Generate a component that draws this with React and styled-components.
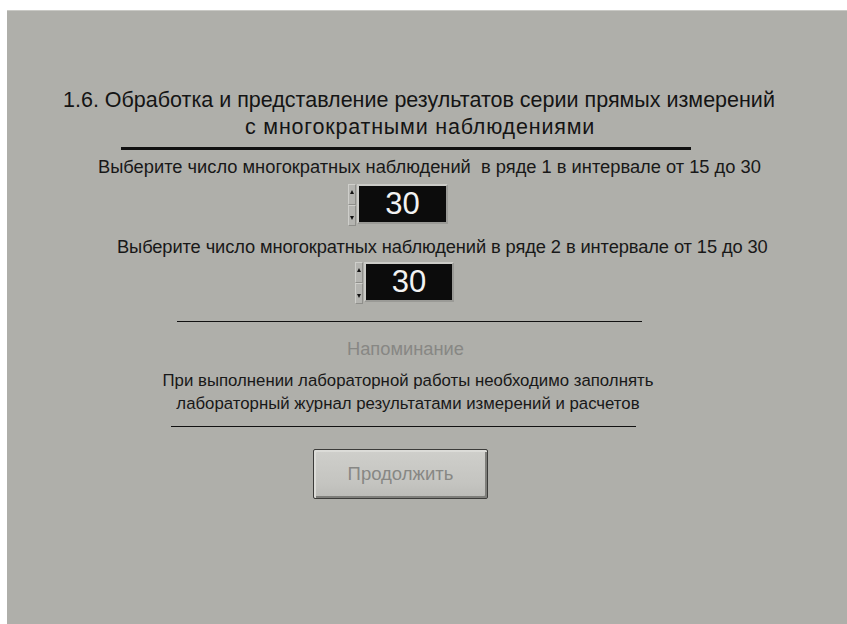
import React from "react";
import styled, { createGlobalStyle } from "styled-components";

const Global = createGlobalStyle`
  html, body { margin: 0; padding: 0; background: #ffffff; }
  body { font-family: "Liberation Sans", Arial, sans-serif; }
`;

const Panel = styled.div`
  margin: 10px 0 0 7px;
  height: 614px;
  background: #afafaa;
  border-top: 1px solid #c9c9c5;
  box-sizing: border-box;
  display: flex;
  flex-direction: column;
  align-items: flex-start;
  padding-top: 76px;
  overflow: hidden;
`;

const TitleLine = styled.div`
  margin-left: ${(p) => p.$x}px;
  font-size: 21.5px;
  line-height: 27px;
  letter-spacing: ${(p) => p.$ls || 0}px;
  color: #141414;
  white-space: nowrap;
`;

const Rule = styled.div`
  margin-left: ${(p) => p.$x}px;
  margin-top: ${(p) => p.$mt}px;
  width: ${(p) => p.$w}px;
  height: ${(p) => p.$h}px;
  background: #111111;
`;

const Label = styled.div`
  margin-left: ${(p) => p.$x}px;
  margin-top: ${(p) => p.$mt}px;
  font-size: 18.3px;
  line-height: 20px;
  letter-spacing: ${(p) => p.$ls || 0}px;
  color: ${(p) => (p.$muted ? "#878784" : "#181818")};
  white-space: pre;
`;

const Numeric = styled.div`
  margin-left: ${(p) => p.$x}px;
  margin-top: ${(p) => p.$mt}px;
  display: flex;
  align-items: flex-start;
  gap: 1px;
`;

const Spinner = styled.div`
  display: flex;
  flex-direction: column;
  width: 8px;
`;

const SpinHalf = styled.div`
  height: 21px;
  box-sizing: border-box;
  border: 1px solid #cfcfcb;
  border-right-color: #8f8f8b;
  border-bottom-color: #8f8f8b;
  background: #b4b4b0;
  display: flex;
  align-items: ${(p) => (p.$down ? "flex-end" : "flex-start")};
  justify-content: center;
  padding: 5px 0;
`;

const Arrow = styled.div`
  width: 0;
  height: 0;
  border-left: 2px solid transparent;
  border-right: 2px solid transparent;
  ${(p) =>
    p.$down
      ? "border-top: 4px solid #111;"
      : "border-bottom: 4px solid #111;"}
`;

const Display = styled.div`
  width: ${(p) => p.$w}px;
  height: ${(p) => p.$h}px;
  box-sizing: border-box;
  background: #0c0c0c;
  border: 2px solid #cbcbc7;
  border-right-color: #9a9a96;
  border-bottom-color: #9a9a96;
  color: #f2f2f2;
  font-size: 31px;
  display: flex;
  align-items: center;
  justify-content: center;
`;

const Body = styled.div`
  margin-left: ${(p) => p.$x}px;
  margin-top: ${(p) => p.$mt}px;
  width: ${(p) => p.$w}px;
  font-size: 16.8px;
  line-height: 23px;
  color: #181818;
  text-align: center;
  white-space: nowrap;
`;

const Button = styled.button`
  margin-left: ${(p) => p.$x}px;
  margin-top: ${(p) => p.$mt}px;
  width: 175px;
  height: 50px;
  box-sizing: border-box;
  border: 1px solid #3c3c3a;
  border-radius: 2px;
  background: linear-gradient(#cfcfcb, #c4c4c0 70%, #bbbbb7);
  box-shadow: inset 2px 2px 0 #dcdcd8, inset -2px -2px 0 #7e7e7a;
  font-family: "Liberation Sans", Arial, sans-serif;
  font-size: 18.5px;
  color: #878784;
  padding: 0;
  cursor: default;
`;

function NumberInput({ x, mt, value, w, h }) {
  return (
    <Numeric $x={x} $mt={mt}>
      <Spinner>
        <SpinHalf>
          <Arrow />
        </SpinHalf>
        <SpinHalf $down>
          <Arrow $down />
        </SpinHalf>
      </Spinner>
      <Display $w={w} $h={h}>{value}</Display>
    </Numeric>
  );
}

export default function App() {
  return (
    <>
      <Global />
      <Panel>
        <TitleLine $x={56}>
          1.6. Обработка и представление результатов серии прямых измерений
        </TitleLine>
        <TitleLine $x={238} $ls={0.8}>с многократными наблюдениями</TitleLine>
        <Rule $x={114} $mt={6} $w={570} $h={3} />
        <Label $x={91} $mt={7}>
          {"Выберите число многократных наблюдений  в ряде 1 в интервале от 15 до 30"}
        </Label>
        <NumberInput x={341} mt={7} value="30" w={91} h={40} />
        <Label $x={110} $mt={11} $ls={-0.1}>
          {"Выберите число многократных наблюдений в ряде 2 в интервале от 15 до 30"}
        </Label>
        <NumberInput x={348} mt={5} value="30" w={90} h={40} />
        <Rule $x={170} $mt={17} $w={465} $h={1} />
        <Label $x={340} $mt={17} $muted>Напоминание</Label>
        <Body $x={121} $mt={10} $w={560}>
          При выполнении лабораторной работы необходимо заполнять
          <br />
          лабораторный журнал результатами измерений и расчетов
        </Body>
        <Rule $x={164} $mt={11} $w={465} $h={1} />
        <Button $x={306} $mt={22}>Продолжить</Button>
      </Panel>
    </>
  );
}
